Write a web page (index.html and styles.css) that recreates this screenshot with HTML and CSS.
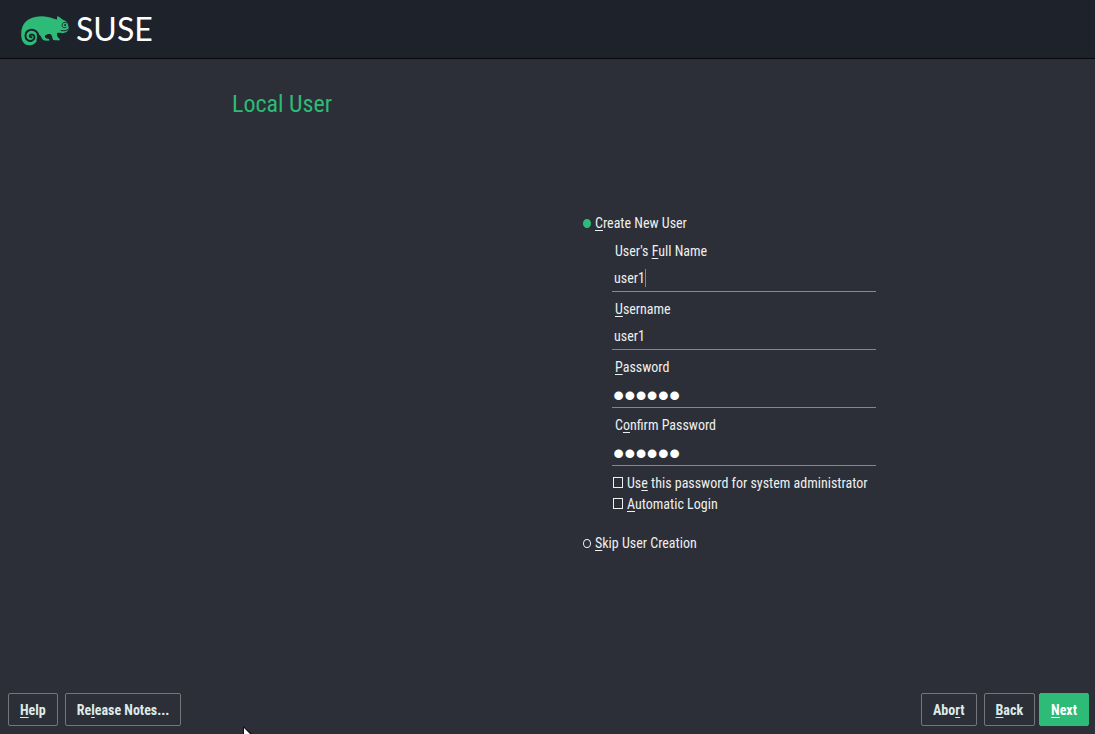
FILE: index.html
```html
<!DOCTYPE html>
<html lang="en">
<head>
<meta charset="utf-8">
<title>Local User</title>
<link rel="stylesheet" href="styles.css">
</head>
<body>
<header class="topbar">
  <svg class="logo" viewBox="60 46 150 94" aria-hidden="true">
    <path fill="#2dbb77" d="M63 103C63 82 72 66 88 58C105 49 127 48 144 52C154 54 163 58 171 60C173 56 170 52 173 50C179 50 184 58 191 61C199 64 204 69 205 76C206 81 208 85 206 91C204 97 196 101 188 101C181 101 174 98 172 101C170 105 172 114 179 118C181 121 180 124 176 123C171 122 166 123 160 122C156 116 158 109 153 105C148 102 140 105 135 108C133 113 137 117 144 118C148 119 149 122 147 124L133 123C126 122 125 114 121 109C117 104 113 102 110 103L112 120C108 131 99 138 87 138C71 138 62 124 63 103Z"/>
    <path fill="none" stroke="#1e222a" stroke-width="6" stroke-linecap="round" stroke-linejoin="round" d="M94 113C89 114 87 109 91 106C97 103 104 108 103 115C101 125 90 127 82 122C73 115 74 101 82 95C93 87 108 91 113 102C115 109 114 116 112 122"/>
    <path fill="none" stroke="#1e222a" stroke-width="3" stroke-linecap="round" d="M200 70C193 65 187 70 187 77C187 84 194 87 199 83M184 93C193 95 200 94 206 89"/>
    <circle cx="196" cy="76" r="3" fill="#1e222a"/>
  </svg>
  <span class="wordmark">SUSE</span>
</header>
<main class="page">
  <h1 class="title">Local User</h1>
  <form class="user-form" id="user-form">
    <label class="choice"><input class="radio" type="radio" name="mode" checked><span><u>C</u>reate New User</span></label>
    <div class="fields">
      <div class="field">
        <label for="fullname">User's <u>F</u>ull Name</label>
        <div class="entry active"><input id="fullname" type="text" value="user1"><span class="caret"></span></div>
      </div>
      <div class="field">
        <label for="username"><u>U</u>sername</label>
        <div class="entry"><input id="username" type="text" value="user1"></div>
      </div>
      <div class="field">
        <label for="password"><u>P</u>assword</label>
        <div class="entry"><input id="password" type="password" value="secret"></div>
      </div>
      <div class="field">
        <label for="confirm">C<u>o</u>nfirm Password</label>
        <div class="entry"><input id="confirm" type="password" value="secret"></div>
      </div>
      <div class="options">
        <label class="option"><input class="check" type="checkbox"><span>Us<u>e</u> this password for system administrator</span></label>
        <label class="option"><input class="check" type="checkbox"><span><u>A</u>utomatic Login</span></label>
      </div>
    </div>
    <label class="choice"><input class="radio" type="radio" name="mode"><span><u>S</u>kip User Creation</span></label>
  </form>
</main>
<footer class="actions">
  <button class="button" type="button"><u>H</u>elp</button>
  <button class="button" type="button">Re<u>l</u>ease Notes...</button>
  <span class="spacer"></span>
  <button class="button" type="button">Abo<u>r</u>t</button>
  <div class="pair">
    <button class="button" type="button"><u>B</u>ack</button>
    <button class="button primary" type="submit" form="user-form"><u>N</u>ext</button>
  </div>
</footer>
<svg class="pointer" viewBox="0 0 9 8" aria-hidden="true"><path d="M0 0L9 8H0Z" fill="#111"/><path d="M1 2L7 8H1Z" fill="#fff"/></svg>
</body>
</html>
```
FILE: styles.css
```css
* { box-sizing: border-box; }
body {
  margin: 0;
  min-height: 100vh;
  display: flex;
  flex-direction: column;
  position: relative;
  background: #2c2f37;
  color: #eeefef;
  font: 14px/20px "Roboto Condensed", Roboto, sans-serif;
}
u { text-decoration-thickness: 1px; text-underline-offset: 2px; }
.topbar {
  display: flex;
  align-items: center;
  gap: 6px;
  height: 59px;
  padding: 2px 20px 0;
  background: #1e222a;
  border-bottom: 1px solid #07090c;
}
.logo { width: 50px; height: 31px; }
.wordmark { font: 32px/36px Lato, sans-serif; color: #fff; padding-bottom: 2px; }
.page { flex: 1; padding: 31px 20% 0 232px; }
.title { margin: 0; font: 24px/28px "Roboto Condensed", Roboto, sans-serif; color: #2dbb77; }
.user-form { width: 293px; margin: 95px 0 0 auto; }
.choice { display: flex; align-items: center; gap: 4px; }
.radio, .check { appearance: none; margin: 0; flex: none; }
.radio { width: 8px; height: 9px; border: 1px solid #eeefef; border-radius: 50%; }
.radio:checked { background: #2dbb77; border-color: #2dbb77; }
.fields { padding: 4px 0 19px 29px; }
.field { height: 58px; padding-top: 4px; }
.field label { display: block; padding-left: 3px; }
.entry { position: relative; height: 31px; padding-top: 6px; border-bottom: 1px solid #858884; }
.entry.active { border-color: #2dbb77; }
.entry input {
  display: block;
  width: 100%;
  height: 22px;
  padding: 0 2px;
  border: 0;
  outline: 0;
  background: transparent;
  color: inherit;
  font: inherit;
}
.entry input[type="password"] { height: 24px; padding: 0 1px; font: 32px/24px "Liberation Sans", sans-serif; color: #fff; }
.caret { position: absolute; left: 33px; top: 8px; width: 1px; height: 18px; background: #85888b; }
.options { padding-top: 3px; }
.option { display: flex; align-items: center; gap: 4px; height: 21px; padding-left: 1px; white-space: nowrap; }
.check { width: 10px; height: 11px; border: 1px solid #eeefef; }
.actions { display: flex; gap: 7px; padding: 0 6px 8px 8px; }
.spacer { flex: 1; }
.pair { display: flex; gap: 4px; }
.button {
  height: 33px;
  padding: 0 11px;
  border: 1px solid #74777a;
  border-radius: 2px;
  background: transparent;
  color: #dcebe9;
  font: 700 14px/20px "Roboto Condensed", Roboto, sans-serif;
}
.primary { background: #2dbb77; border-color: #2dbb77; color: #fff; }
.pointer { position: absolute; left: 243px; bottom: 0; width: 9px; height: 8px; }
```
